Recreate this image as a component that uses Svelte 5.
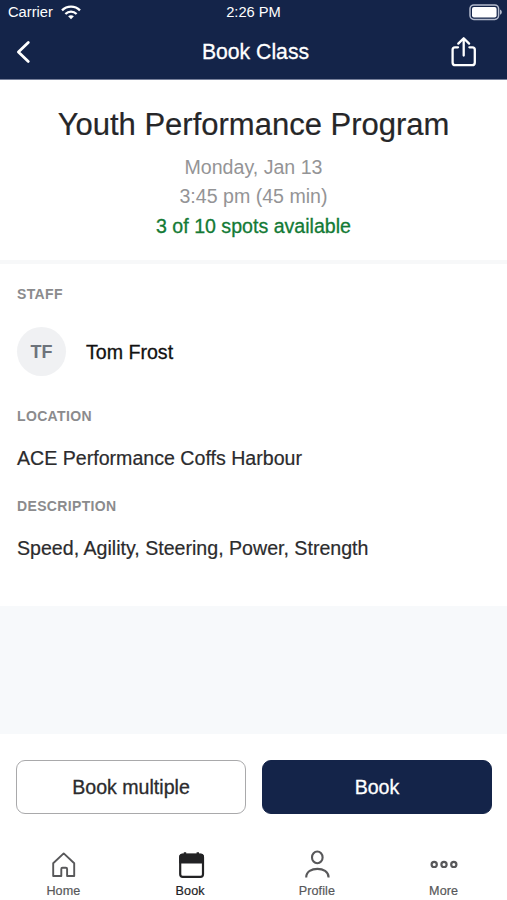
<script lang="ts">
  type Tab = 'home' | 'book' | 'profile' | 'more';

  const booking = {
    title: 'Youth Performance Program',
    date: 'Monday, Jan 13',
    time: '3:45 pm (45 min)',
    spots: '3 of 10 spots available',
    staff: 'Tom Frost',
    initials: 'TF',
    location: 'ACE Performance Coffs Harbour',
    description: 'Speed, Agility, Steering, Power, Strength'
  };

  const tabs: { id: Tab; label: string }[] = [
    { id: 'home', label: 'Home' },
    { id: 'book', label: 'Book' },
    { id: 'profile', label: 'Profile' },
    { id: 'more', label: 'More' }
  ];

  let active: Tab = $state('book');
</script>

<div class="screen">
  <header class="top">
    <div class="status">
      <div class="carrier">
        <span>Carrier</span>
        <svg width="20" height="15" viewBox="0 0 20 15" fill="none" stroke="#fff" stroke-width="2.3">
          <path d="M1 5.4C6 .4 14 .4 19 5.4" />
          <path d="M4.4 9C7.6 5.9 12.4 5.9 15.6 9" />
          <path d="M10 14.2 7.1 11.3C8.8 9.8 11.2 9.8 12.9 11.3Z" fill="#fff" stroke="none" />
        </svg>
      </div>
      <span class="clock">2:26 PM</span>
      <svg class="battery" width="34" height="17" viewBox="0 0 34 17">
        <rect x="1" y="1" width="28.6" height="14.4" rx="3.8" fill="none" stroke="#b4bbcd" stroke-width="1.5" />
        <rect x="3" y="3" width="24.6" height="10.4" rx="2" fill="#fff" />
        <path d="M31 5.6C33.4 6.4 33.4 10 31 10.8Z" fill="#b4bbcd" />
      </svg>
    </div>
    <nav class="bar">
      <button class="icon-btn" aria-label="Back">
        <svg width="16" height="24" viewBox="0 0 16 24" fill="none" stroke="#fff" stroke-width="2.8" stroke-linecap="round" stroke-linejoin="round">
          <path d="M12.3 2.4 2.4 12l9.9 9.4" />
        </svg>
      </button>
      <h1>Book Class</h1>
      <button class="icon-btn share" aria-label="Share">
        <svg width="28" height="32" viewBox="0 0 28 32" fill="none" stroke="#fff" stroke-width="2.3" stroke-linecap="round" stroke-linejoin="round">
          <path d="M8 11.3H5Q2.6 11.3 2.6 13.7V26.4Q2.6 29.2 5.4 29.2H22Q24.8 29.2 24.8 26.4V13.7Q24.8 11.3 22.4 11.3H19.4" />
          <path d="M13.7 19.6V2.4M8.3 7.6 13.7 2.3l5.4 5.3" />
        </svg>
      </button>
    </nav>
  </header>

  <section class="summary">
    <h2>{booking.title}</h2>
    <p>{booking.date}</p>
    <p>{booking.time}</p>
    <p class="spots">{booking.spots}</p>
  </section>

  <section class="details">
    <h3>Staff</h3>
    <div class="staff">
      <span class="avatar">{booking.initials}</span>
      <span class="name">{booking.staff}</span>
    </div>
    <h3>Location</h3>
    <p>{booking.location}</p>
    <h3>Description</h3>
    <p>{booking.description}</p>
  </section>

  <footer class="bottom">
    <div class="actions">
      <button class="action">Book multiple</button>
      <button class="action primary">Book</button>
    </div>
    <nav class="tabs">
      {#each tabs as tab}
        <button class="tab" class:active={active === tab.id} onclick={() => (active = tab.id)}>
          <svg width="32" height="32" viewBox="0 0 32 32" fill="none" stroke="currentColor" stroke-width="1.9" stroke-linejoin="round">
            {#if tab.id === 'home'}
              <path d="M6.2 28V15.2L16.7 5.4l10.5 9.8V28h-7.1v-7.1q0-1.2-1.2-1.2h-3.4q-1.2 0-1.2 1.2V28Z" />
            {:else if tab.id === 'book'}
              <rect x="6.2" y="6.6" width="22.8" height="22.2" rx="2.6" stroke-width="2.2" />
              <path d="M6.2 14.6V9.2Q6.2 6.6 8.8 6.6h17.6Q29 6.6 29 9.2v5.4Z" fill="currentColor" />
              <path d="M11 4.2V9M23.8 4.2V9" stroke-width="2.4" />
            {:else if tab.id === 'profile'}
              <ellipse cx="16.3" cy="9.4" rx="5.3" ry="5.9" stroke-width="2.1" />
              <path d="M5.2 29.4C5.2 18 27.6 18 27.6 29.4" stroke-width="2.1" />
            {:else}
              <circle cx="6.2" cy="16.4" r="2.6" stroke-width="2.2" />
              <circle cx="16" cy="16.4" r="2.6" stroke-width="2.2" />
              <circle cx="25.8" cy="16.4" r="2.6" stroke-width="2.2" />
            {/if}
          </svg>
          <span>{tab.label}</span>
        </button>
      {/each}
    </nav>
  </footer>
</div>

<style>
  :global(body) {
    margin: 0;
    background: #fff;
  }

  .screen {
    display: flex;
    flex-direction: column;
    width: 507px;
    height: 900px;
    overflow: hidden;
    background: #f7f9fb;
    color: #2b2b2d;
    font-family: 'Liberation Sans', Arial, sans-serif;
    font-size: 19.6px;
  }

  h1,
  h2,
  h3,
  p {
    margin: 0;
    font-weight: 400;
  }

  button {
    border: 0;
    padding: 0;
    background: none;
    font: inherit;
    color: inherit;
  }

  svg {
    display: block;
  }

  /* Header */
  .top {
    height: 80px;
    box-sizing: border-box;
    border-bottom: 1px solid #77809a;
    background: #142449;
    color: #fff;
  }

  .status {
    display: grid;
    grid-template-columns: 1fr auto 1fr;
    align-items: center;
    height: 24px;
    padding: 0 4px 0 8px;
    font-size: 14.7px;
  }

  .carrier {
    display: flex;
    align-items: center;
    gap: 8px;
  }

  .clock {
    margin-right: 4px;
  }

  .battery {
    justify-self: end;
  }

  .bar {
    display: grid;
    grid-template-columns: 1fr auto 1fr;
    align-items: center;
    height: 55px;
    padding: 0 29px 0 16px;
  }

  .bar h1 {
    margin-left: 17px;
    font-size: 21.2px;
    -webkit-text-stroke: 0.3px currentColor;
  }

  .share {
    justify-self: end;
  }

  /* Class summary */
  .summary {
    height: 184px;
    box-sizing: border-box;
    padding-top: 25px;
    border-bottom: 4px solid #f7f8f9;
    background: #fff;
    color: #949496;
    line-height: 29.3px;
    text-align: center;
  }

  .summary h2 {
    margin-bottom: 8px;
    color: #262628;
    font-size: 31px;
    line-height: 40px;
    -webkit-text-stroke: 0.2px currentColor;
  }

  .summary .spots {
    color: #137a35;
    -webkit-text-stroke: 0.3px currentColor;
  }

  /* Details */
  .details {
    height: 342px;
    box-sizing: border-box;
    padding: 20px 17px 0;
    background: #fff;
  }

  .details h3 {
    color: #8b8b8d;
    font-size: 14px;
    font-weight: 700;
    line-height: 20px;
    letter-spacing: 0.35px;
    text-transform: uppercase;
  }

  .details p {
    margin: 18px 0 24px;
    line-height: 28px;
    -webkit-text-stroke: 0.2px currentColor;
  }

  .staff {
    display: flex;
    align-items: center;
    gap: 20px;
    margin: 23px 0 30px;
    color: #111;
  }

  .name {
    padding-top: 2px;
    -webkit-text-stroke: 0.3px currentColor;
  }

  .avatar {
    display: flex;
    align-items: center;
    justify-content: center;
    width: 49px;
    height: 49px;
    box-sizing: border-box;
    padding-top: 2px;
    border-radius: 50%;
    background: #f0f1f3;
    color: #6d737b;
    font-size: 18px;
    font-weight: 700;
  }

  /* Actions and tabs */
  .bottom {
    height: 166px;
    box-sizing: border-box;
    margin-top: auto;
    padding-top: 26px;
    background: #fff;
  }

  .actions {
    display: grid;
    grid-template-columns: 1fr 1fr;
    gap: 16px;
    padding: 0 15px 0 16px;
  }

  .action {
    height: 54px;
    border: 1px solid #a9a9ab;
    border-radius: 9px;
    -webkit-text-stroke: 0.3px currentColor;
  }

  .action.primary {
    border-color: #142449;
    background: #142449;
    color: #fff;
  }

  .tabs {
    display: grid;
    grid-template-columns: repeat(4, 1fr);
    margin-top: 34px;
  }

  .tab {
    display: flex;
    flex-direction: column;
    align-items: center;
    gap: 3px;
    color: #58585a;
    font-size: 12.6px;
    line-height: 16px;
    letter-spacing: 0.1px;
  }

  .tab span {
    -webkit-text-stroke: 0.2px currentColor;
  }

  .tab.active {
    color: #222224;
  }
</style>
